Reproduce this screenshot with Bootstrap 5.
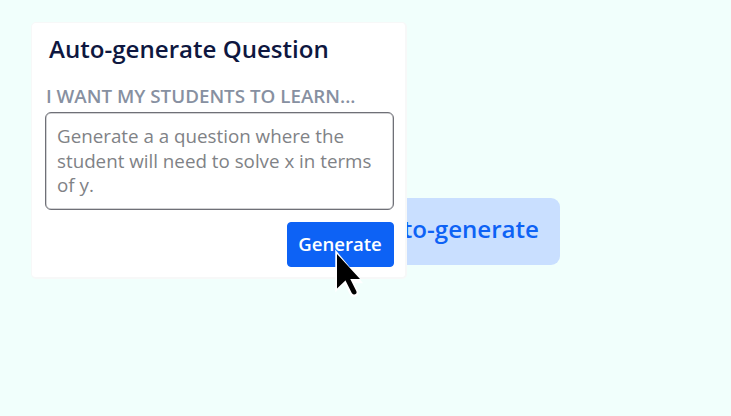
<!DOCTYPE html>
<html lang="en">
<head>
<meta charset="utf-8">
<meta name="viewport" content="width=device-width, initial-scale=1">
<title>Auto-generate Question</title>
<link href="https://cdn.jsdelivr.net/npm/bootstrap@5.3.0/dist/css/bootstrap.min.css" rel="stylesheet">
<style>
body { background: #f1fffc; font-family: "Open Sans", sans-serif; height: 416px; overflow: hidden; }
.stage { padding: 22px 0 0 31px; }
.question-card { width: 376px; height: 257px; border: 1px solid #f7f8f8; border-right-width: 2px; border-bottom-width: 2px; border-radius: 5px; padding: 0 11px 0 13px; z-index: 2; }
.question-title { font-size: 24.1px; line-height: 32px; font-weight: 600; color: #0e1740; margin: 10px 0 0 4px; }
.prompt-label { font-size: 18.8px; line-height: 24px; font-weight: 600; color: #8790a1; margin: 19px 0 4px 1px; }
.prompt-box { height: 98px; border: 1px solid #6f7077; box-shadow: inset 0 0 0 .5px #a5a6aa; border-radius: 6px; padding: 11px 11px 0; font-size: 18.78px; line-height: 24.6px; resize: none; overflow: hidden; }
.prompt-box::placeholder { color: #7f8286; opacity: 1; }
.btn-generate { --bs-btn-bg: #0d62f5; --bs-btn-border-color: #0d62f5; width: 107px; height: 45px; margin-top: 12px; padding: 0 1px 1px 0; font-size: 18.6px; font-weight: 600; border-radius: 4px; }
.btn-auto { width: 193px; height: 67px; margin: 176px 0 0 -40px; padding: 0 21px 4px 0; font-size: 24.1px; font-weight: 600; color: #0d62f5; background: #c9dfff; border: 0; border-radius: 9px; text-align: right; }
.pointer { left: 332px; top: 246px; z-index: 3; }
</style>
</head>
<body>
<main class="stage d-flex align-items-start">
  <section class="question-card bg-white position-relative flex-shrink-0">
    <h1 class="question-title text-nowrap">Auto-generate Question</h1>
    <label class="prompt-label d-block text-nowrap" for="prompt">I WANT MY STUDENTS TO LEARN...</label>
    <textarea class="prompt-box form-control" id="prompt" placeholder="Generate a a question where the student will need to solve x in terms of y."></textarea>
    <div class="d-flex justify-content-end"><button type="button" class="btn btn-primary btn-generate">Generate</button></div>
  </section>
  <button type="button" class="btn btn-auto text-nowrap">to-generate</button>
</main>
<svg class="pointer position-absolute" width="32" height="54" viewBox="0 0 32 54" aria-hidden="true">
  <g stroke="#fff" fill="#fff" stroke-linecap="round"><path d="M4.500 7v36.500L12 36h16.500z" stroke-width="2.500"/><path d="M15 34l7 13.500" stroke-width="9" transform="translate(0 -1)"/></g>
  <path d="M5 8v34.500l10-9.500h13z"/><path d="M15 32l7 14" stroke="#000" stroke-width="5" stroke-linecap="round"/>
</svg>
<script src="https://cdn.jsdelivr.net/npm/bootstrap@5.3.0/dist/js/bootstrap.bundle.min.js"></script>
</body>
</html>
